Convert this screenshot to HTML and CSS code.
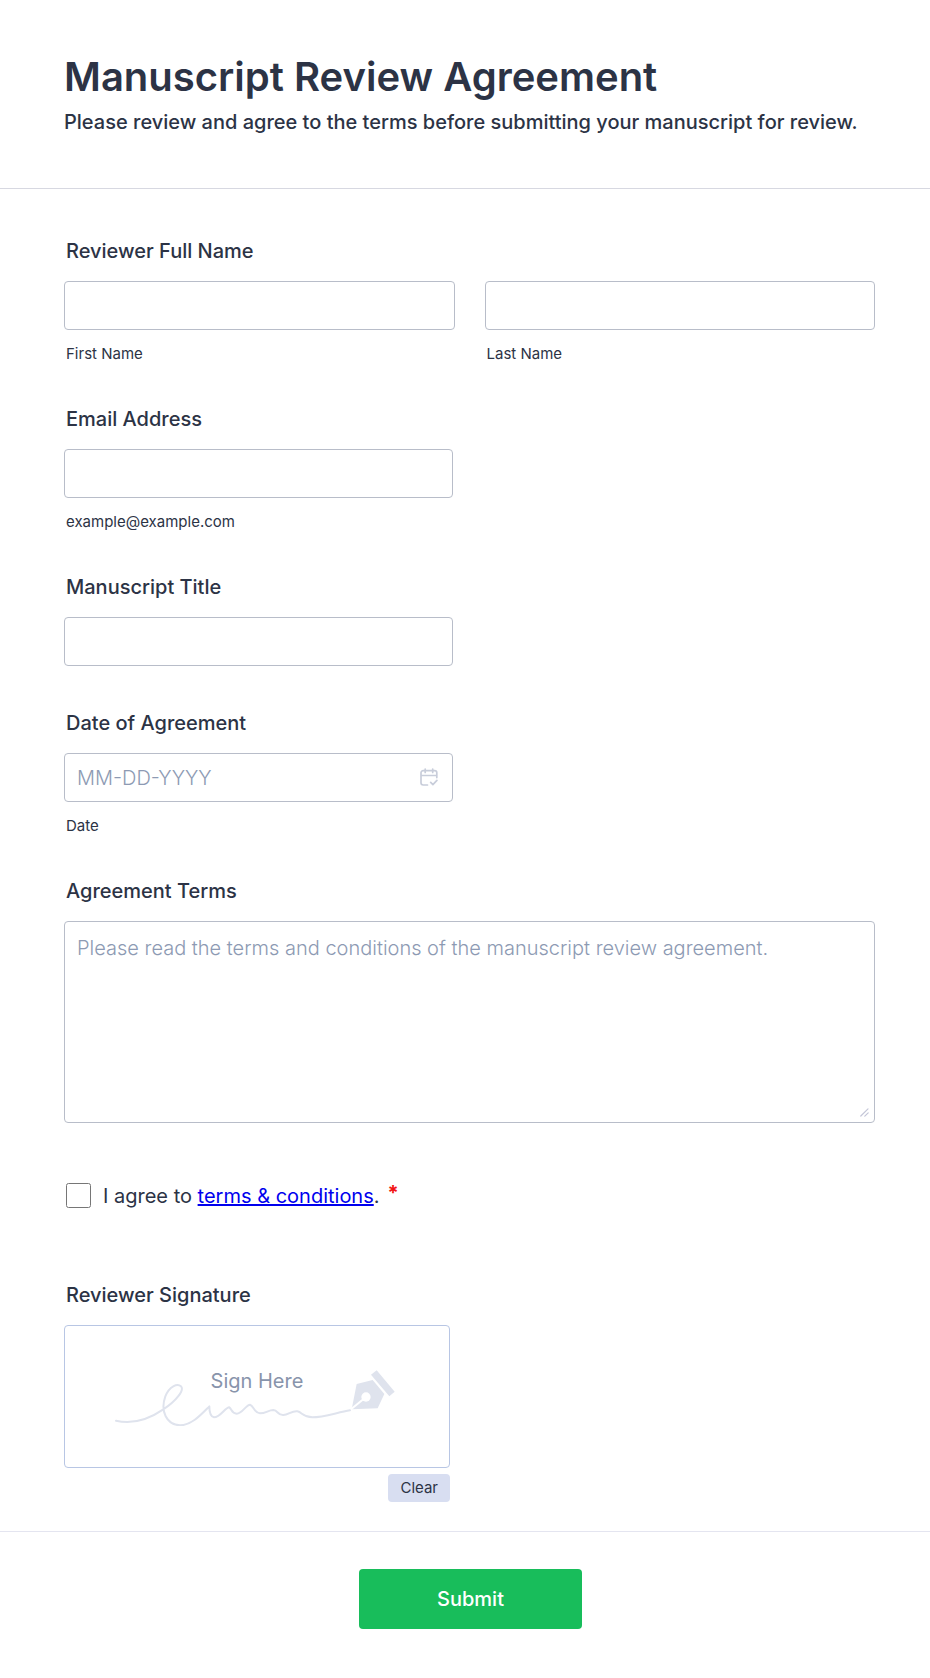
FILE: index.html
```html
<!DOCTYPE html>
<html lang="en">
<head>
<meta charset="utf-8">
<meta name="viewport" content="width=device-width, initial-scale=1">
<title>Manuscript Review Agreement</title>
<link rel="stylesheet" href="styles.css">
</head>
<body>
<form class="form">
  <header class="form-header">
    <h1 class="form-title">Manuscript Review Agreement</h1>
    <p class="form-subtitle">Please review and agree to the terms before submitting your manuscript for review.</p>
  </header>

  <div class="form-body">
    <fieldset class="field">
      <legend class="field-label">Reviewer Full Name</legend>
      <div class="name-row">
        <div class="name-part">
          <input class="text-box" type="text" id="first-name">
          <label class="sub-label" for="first-name">First Name</label>
        </div>
        <div class="name-part">
          <input class="text-box" type="text" id="last-name">
          <label class="sub-label" for="last-name">Last Name</label>
        </div>
      </div>
    </fieldset>

    <div class="field field-half">
      <label class="field-label" for="email">Email Address</label>
      <input class="text-box" type="email" id="email" aria-describedby="email-hint">
      <span class="sub-label" id="email-hint">example@example.com</span>
    </div>

    <div class="field field-half">
      <label class="field-label" for="manuscript">Manuscript Title</label>
      <input class="text-box" type="text" id="manuscript">
    </div>

    <div class="field field-half">
      <label class="field-label" for="date">Date of Agreement</label>
      <div class="date-box">
        <input class="text-box" type="text" id="date" placeholder="MM-DD-YYYY" aria-describedby="date-hint">
        <button class="date-button" type="button" aria-label="Choose date">
          <svg width="18" height="18" viewBox="0 0 18 18" fill="none" stroke="#c8cdda" stroke-width="1.7" stroke-linecap="round" stroke-linejoin="round">
            <path d="M7.5 17H3.2A2.2 2.2 0 0 1 1 14.8V4.8a2.2 2.2 0 0 1 2.2-2.2h11.4a2.2 2.2 0 0 1 2.2 2.2v4.8M1 7.5h15.8M5.2 1v3.4M12.7 1v3.4M10.7 14.4l2.2 2.2 4-4.2"/>
          </svg>
        </button>
      </div>
      <span class="sub-label" id="date-hint">Date</span>
    </div>

    <div class="field">
      <label class="field-label" for="terms">Agreement Terms</label>
      <div class="area-box">
        <textarea class="text-area" id="terms" placeholder="Please read the terms and conditions of the manuscript review agreement."></textarea>
        <svg class="area-grip" width="9" height="9" viewBox="0 0 9 9" fill="none" stroke="#c4c6d8" stroke-width="1.2" stroke-linecap="round">
          <path d="M.8 8L8 .8M4.8 8.2L8.2 4.8"/>
        </svg>
      </div>
    </div>

    <div class="agree-row">
      <input class="agree-check" type="checkbox" id="agree" required>
      <label class="agree-label" for="agree">I agree to <a href="#terms">terms &amp; conditions</a>.</label>
      <span class="required">*</span>
    </div>

    <div class="field field-signature">
      <span class="field-label" id="signature-label">Reviewer Signature</span>
      <div class="signature-pad" role="img" aria-labelledby="signature-label">
        <svg width="284" height="58" viewBox="195 170 852 174" fill="none">
          <path d="M198 328C246 339 292 327 340 294C378 270 404 236 393 225C382 215 358 225 346 255C330 300 350 340 390 342C425 342 455 308 478 285C478 300 480 316 492 318C512 318 525 288 538 288C545 293 545 307 560 307C577 307 588 280 600 280C611 283 612 305 630 306C648 306 655 296 670 296C684 297 683 312 700 311C715 311 725 298 742 300C757 303 758 317 787 318C820 318 860 304 900 297" stroke="#dfe3ed" stroke-width="6" stroke-linecap="round" stroke-linejoin="round"/>
          <path d="M920 218L968 206L1003 248L983 291L905 294ZM980 177L1034 241L1018 255L963 190Z" fill="#dfe3ed"/>
          <circle cx="948" cy="257" r="14" fill="#fff"/>
          <path d="M948 257L903 294" stroke="#fff" stroke-width="6"/>
        </svg>
        <span class="signature-hint">Sign Here</span>
      </div>
      <button class="clear-button" type="button">Clear</button>
    </div>
  </div>

  <footer class="form-footer">
    <button class="submit-button" type="submit">Submit</button>
  </footer>
</form>
</body>
</html>
```
FILE: styles.css
```css
* {
  box-sizing: border-box;
}

body {
  margin: 0;
  background: #fff;
  color: #2c3345;
  font-family: Inter, "Liberation Sans", sans-serif;
  font-size: 20px;
  line-height: 24px;
}

input,
textarea,
button {
  font: inherit;
  color: inherit;
}

.form-header {
  padding: 53px 55px 54px 64px;
  border-bottom: 1px solid #d7d8e1;
}

.form-title {
  margin: 0;
  font-size: 40px;
  font-weight: 600;
  line-height: 48px;
}

.form-subtitle {
  margin: 9px 0 0;
  font-weight: 450;
}

.form-body {
  display: flex;
  flex-direction: column;
  gap: 45px;
  padding: 50px 55px 29px 64px;
}

.field {
  display: flex;
  flex-direction: column;
  min-width: 0;
  margin: 0;
  padding: 0;
  border: 0;
}

.field-half {
  width: 48%;
}

.field-label {
  margin-bottom: 18px;
  padding: 0 2px;
  font-weight: 450;
}

.name-row {
  display: grid;
  grid-template-columns: 1fr 1fr;
  gap: 30px;
}

.name-part {
  display: flex;
  flex-direction: column;
}

.text-box,
.text-area {
  width: 100%;
  border: 1px solid #b8bdc9;
  border-radius: 4px;
  background: #fff;
  padding: 0 12px;
}

.text-box {
  height: 49px;
}

.text-box::placeholder,
.text-area::placeholder {
  color: #8d9ab3;
  font-weight: 300;
  opacity: 1;
}

.sub-label {
  margin-top: 15px;
  padding: 0 2px;
  font-size: 15px;
  line-height: 17px;
}

.date-box,
.area-box {
  display: flex;
  position: relative;
}

.date-button {
  display: flex;
  position: absolute;
  top: 15px;
  right: 15px;
  padding: 0;
  border: 0;
  background: none;
}

.text-area {
  height: 202px;
  padding-top: 14px;
  resize: none;
}

.area-grip {
  position: absolute;
  right: 6px;
  bottom: 6px;
}

.agree-row {
  display: flex;
  align-items: center;
  padding: 15px 2px 30px;
}

.agree-check {
  width: 25px;
  height: 25px;
  margin: 0 12px 0 0;
}

.required {
  align-self: flex-start;
  margin-left: 8px;
  color: #f21313;
  font-weight: 700;
  line-height: 20px;
}

.field-signature {
  width: 386px;
  max-width: 100%;
}

.signature-pad {
  display: flex;
  align-items: center;
  justify-content: center;
  position: relative;
  height: 143px;
  border: 1px solid #b8c6e4;
  border-radius: 4px;
}

.signature-hint {
  position: absolute;
  top: 43px;
  left: 0;
  right: 0;
  color: #8894ab;
  text-align: center;
}

.clear-button {
  align-self: flex-end;
  margin-top: 6px;
  padding: 5px 12px;
  border: 0;
  border-radius: 4px;
  background: #d8def1;
  font-size: 15px;
  line-height: 18px;
}

.form-footer {
  display: flex;
  justify-content: center;
  padding: 37px 53px 49px 64px;
  border-top: 1px solid #e4e5f0;
}

.submit-button {
  min-width: 223px;
  height: 60px;
  border: 0;
  border-radius: 4px;
  background: #18bd5b;
  color: #fff;
  font-weight: 450;
}
```
